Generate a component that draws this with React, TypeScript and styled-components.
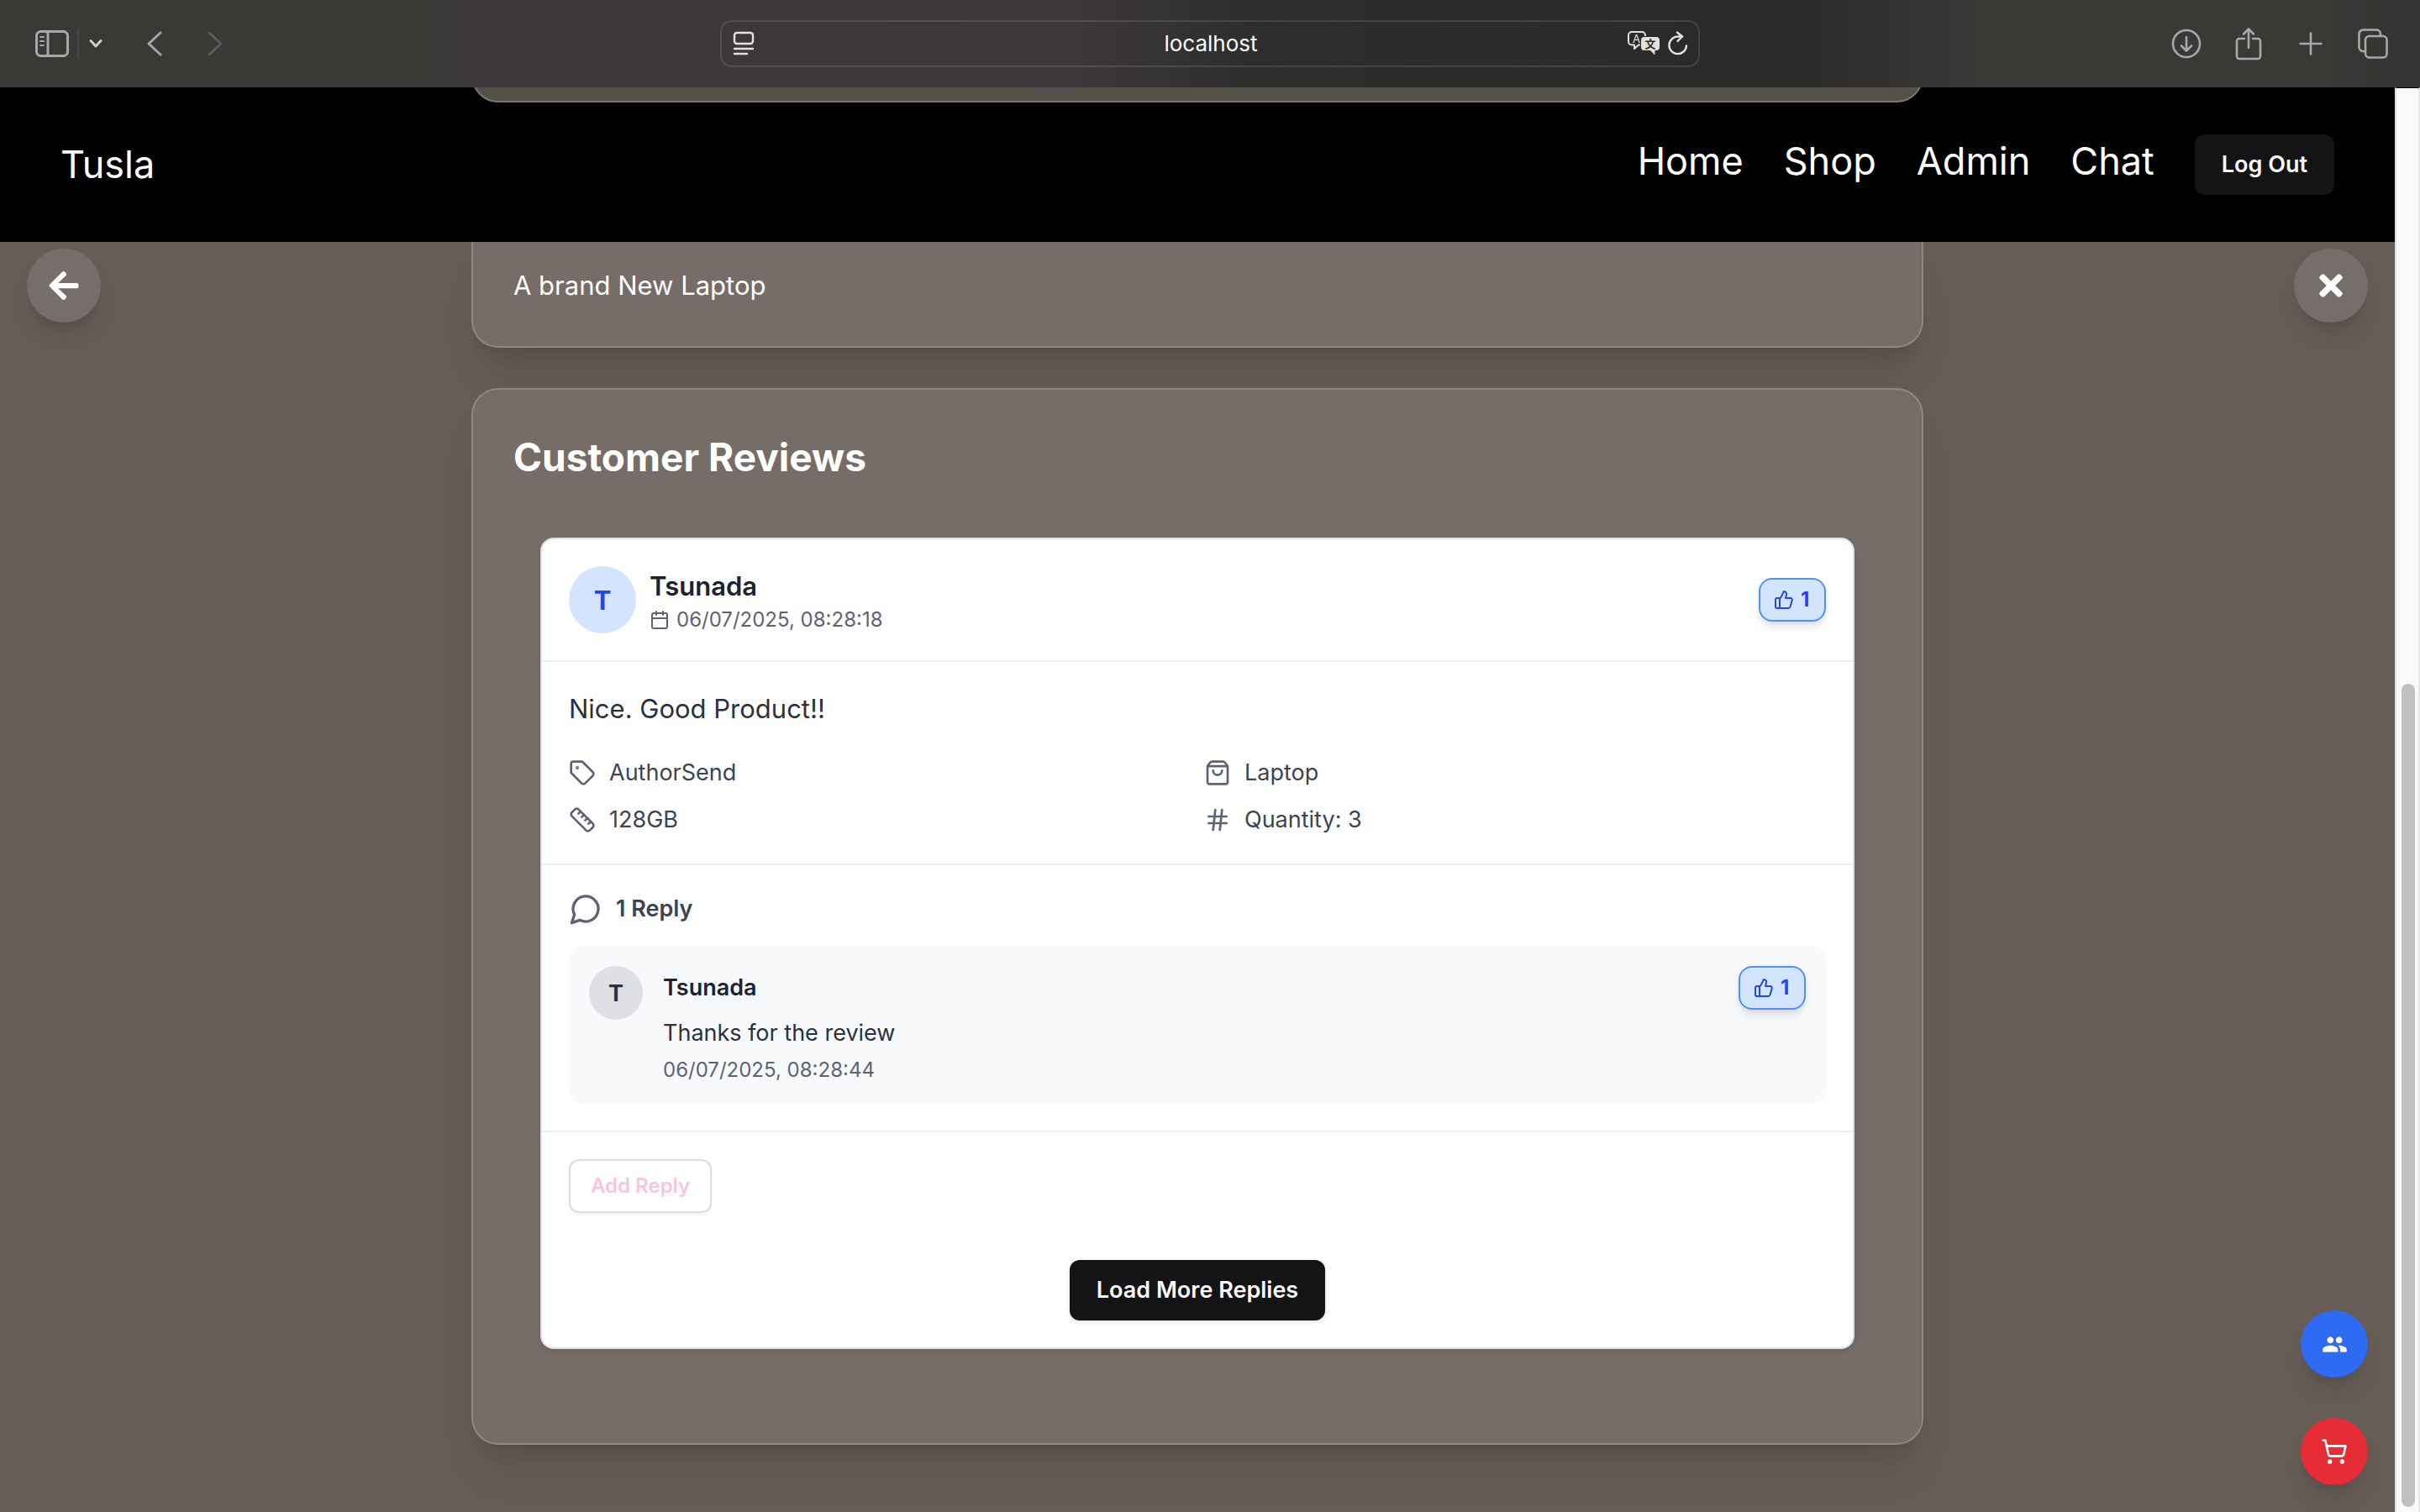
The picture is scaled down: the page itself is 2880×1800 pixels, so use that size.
import React from "react";
import styled, { createGlobalStyle } from "styled-components";
import { Calendar, Hash, Ruler, ShoppingBag, ShoppingCart, Tag, ThumbsUp } from "lucide-react";
import { FaArrowLeft, FaTimes } from "react-icons/fa";
import { MdPeople } from "react-icons/md";

const GlobalStyle = createGlobalStyle`
  *, *::before, *::after { box-sizing: border-box; }
  html, body { margin: 0; padding: 0; }
  body {
    font-family: Inter, Roboto, "Liberation Sans", sans-serif;
    background: #665d57;
    color: #ffffff;
  }
  button, input { font-family: inherit; margin: 0; }
  button { cursor: pointer; }
  h1, h2, h3, p, ul { margin: 0; padding: 0; }
  svg { display: block; flex-shrink: 0; }
`;

/* ---------- browser window ---------- */

const Window = styled.div`
  display: flex;
  flex-direction: column;
  min-height: 100vh;
`;

const Toolbar = styled.header`
  display: grid;
  grid-template-columns: 1fr minmax(0, 1166px) 1fr;
  align-items: center;
  height: 104px;
  background: linear-gradient(
    90deg,
    #3a3936 0%,
    #3a3936 18%,
    #3d373a 21%,
    #3d383b 44%,
    #2d2d2c 52%,
    #2a2a29 74%,
    #3a3936 82%,
    #3a3936 96%,
    #343331 100%
  );
`;

const ToolGroup = styled.div<{ $end?: boolean }>`
  display: flex;
  align-items: center;
  justify-content: ${(p) => (p.$end ? "flex-end" : "flex-start")};
  gap: ${(p) => (p.$end ? "30px" : "8px")};
  padding: ${(p) => (p.$end ? "0 34px" : "0 40px")};
`;

const ToolButton = styled.button<{ $dim?: boolean }>`
  display: flex;
  align-items: center;
  justify-content: center;
  min-width: 44px;
  height: 52px;
  padding: 0;
  border: 0;
  background: none;
  color: ${(p) => (p.$dim ? "#5c5b59" : "#a9a8a6")};
`;

const SlimButton = styled(ToolButton)`
  min-width: 24px;
  color: #d0cfcd;
`;

const ToolDivider = styled.span`
  width: 2px;
  height: 36px;
  background: #474644;
`;

const HistoryGroup = styled.div`
  display: flex;
  gap: 28px;
  padding-left: 28px;
`;

const AddressBar = styled.div`
  display: flex;
  align-items: center;
  gap: 8px;
  height: 56px;
  padding: 0 10px 0 12px;
  border: 2px solid rgba(255, 255, 255, 0.12);
  border-radius: 14px;
  color: #e2e1e1;
`;

const AddressSide = styled.div<{ $end?: boolean }>`
  display: flex;
  flex: 0 0 80px;
  gap: 8px;
  justify-content: ${(p) => (p.$end ? "flex-end" : "flex-start")};
`;

const AddressButton = styled.button`
  display: flex;
  padding: 0;
  border: 0;
  background: none;
  color: inherit;
`;

const AddressInput = styled.input`
  flex: 1;
  min-width: 0;
  padding: 0;
  border: 0;
  outline: 0;
  background: none;
  color: #ffffff;
  font-size: 26px;
  line-height: 32px;
  text-align: center;
`;

const Viewport = styled.div`
  display: flex;
  flex: 1;
`;

const Page = styled.div`
  display: flex;
  flex: 1;
  flex-direction: column;
  min-width: 0;
  background: #665d57;
`;

const ScrollTrack = styled.div`
  display: flex;
  flex-direction: column;
  justify-content: flex-end;
  flex: 0 0 30px;
  padding: 0 4px 6px 6px;
  border-left: 2px solid #e0e3e6;
  border-right: 2px solid #e8e8e8;
  border-top: 1px solid #000000;
  background: #fafafa;
`;

const ScrollThumb = styled.div`
  width: 16px;
  height: 58%;
  border-radius: 8px;
  background: #c0c0c0;
`;

/* ---------- site navigation ---------- */

const SiteHeader = styled.div`
  background: #000000;
`;

const CardPeek = styled.div`
  display: flex;
  align-items: flex-end;
  height: 18px;
  max-width: 1728px;
  margin: 0 auto;
  overflow: hidden;
`;

const CardPeekEdge = styled.div`
  flex: 1;
  height: 64px;
  flex-shrink: 0;
  border: 2px solid #7b7672;
  border-radius: 32px;
  background: #54504b;
`;

const NavBar = styled.nav`
  display: flex;
  align-items: center;
  justify-content: space-between;
  padding: 38px 72px 56px;
`;

const Brand = styled.a`
  color: #ffffff;
  font-size: 45px;
  line-height: 64px;
  text-decoration: none;
`;

const NavItems = styled.div`
  display: flex;
  align-items: flex-start;
  gap: 48px;
`;

const NavLink = styled.a`
  color: #ffffff;
  font-size: 45px;
  line-height: 64px;
  text-decoration: none;
`;

const SolidButton = styled.button`
  height: 72px;
  padding: 0 32px;
  border: 0;
  border-radius: 12px;
  background: #141416;
  color: #fafafa;
  font-size: 27px;
  font-weight: 600;
  line-height: 40px;
  box-shadow: 0 2px 6px rgba(0, 0, 0, 0.12);
`;

/* ---------- page content ---------- */

const Main = styled.main`
  position: relative;
  flex: 1;
  padding: 0 32px 80px;
`;

const Column = styled.div`
  display: flex;
  flex-direction: column;
  gap: 48px;
  max-width: 1728px;
  margin: 0 auto;
`;

const Panel = styled.section<{ $cut?: boolean }>`
  padding: ${(p) => (p.$cut ? "28px 48px 48px" : "48px")};
  border: 2px solid rgba(255, 255, 255, 0.18);
  border-top-width: ${(p) => (p.$cut ? "0" : "2px")};
  border-radius: ${(p) => (p.$cut ? "0 0 32px 32px" : "32px")};
  background: rgba(255, 245, 255, 0.11);
  box-shadow: 0 40px 50px -10px rgba(0, 0, 0, 0.1), 0 16px 20px -12px rgba(0, 0, 0, 0.1);
`;

const Description = styled.p`
  font-size: 31px;
  line-height: 48px;
`;

const PanelTitle = styled.h2`
  font-size: 46px;
  font-weight: 700;
  line-height: 64px;
`;

const ReviewList = styled.div`
  padding: 64px 32px;
`;

const Review = styled.article`
  border: 2px solid #dfe1e6;
  border-radius: 16px;
  background: #ffffff;
  color: #1b2230;
  box-shadow: 0 2px 6px rgba(0, 0, 0, 0.1);
`;

const Section = styled.div<{ $last?: boolean }>`
  padding: 32px;
  border-bottom: ${(p) => (p.$last ? "0" : "2px solid #eff0f5")};
`;

const HeaderRow = styled.div`
  display: flex;
  align-items: center;
  gap: 16px;
`;

const Avatar = styled.span<{ $small?: boolean }>`
  display: flex;
  align-items: center;
  justify-content: center;
  flex-shrink: 0;
  width: ${(p) => (p.$small ? "64px" : "80px")};
  height: ${(p) => (p.$small ? "64px" : "80px")};
  border-radius: 50%;
  background: ${(p) => (p.$small ? "#dfe0e6" : "#d3e4fe")};
  color: ${(p) => (p.$small ? "#2a3342" : "#1f48e6")};
  font-size: ${(p) => (p.$small ? "27px" : "31px")};
  font-weight: 700;
`;

const Grow = styled.div`
  flex: 1;
  min-width: 0;
`;

const Author = styled.h3<{ $small?: boolean }>`
  color: #1b2230;
  font-size: ${(p) => (p.$small ? "27px" : "31px")};
  font-weight: 600;
  line-height: ${(p) => (p.$small ? "52px" : "48px")};
`;

const Stamp = styled.p`
  display: flex;
  align-items: center;
  gap: 8px;
  color: #5d6375;
  font-size: 24px;
  line-height: 32px;
`;

const Like = styled.button`
  display: flex;
  align-items: center;
  gap: 8px;
  min-width: 80px;
  height: 52px;
  padding: 0 16px;
  border: 2px solid #4f91f9;
  border-radius: 16px;
  background: #d3e4fe;
  color: #1f48e6;
  font-size: 24px;
  font-weight: 700;
  line-height: 32px;
  box-shadow: 0 8px 12px -2px rgba(0, 0, 0, 0.1), 0 4px 8px -4px rgba(0, 0, 0, 0.1);
`;

const Comment = styled.p`
  color: #29323f;
  font-size: 31px;
  line-height: 48px;
`;

const Facts = styled.div`
  display: grid;
  grid-template-columns: 1fr 1fr;
  gap: 16px;
  padding-top: 32px;
`;

const Fact = styled.div<{ $strong?: boolean }>`
  display: flex;
  align-items: center;
  gap: 16px;
  color: #3b4452;
  font-size: 27px;
  font-weight: ${(p) => (p.$strong ? 600 : 400)};
  line-height: 40px;

  svg { color: #5d6375; }
`;

const Reply = styled.div`
  display: flex;
  align-items: flex-start;
  gap: 24px;
  margin-top: 24px;
  padding: 24px;
  border-radius: 16px;
  background: #f8f9fb;
`;

const ReplyBody = styled(Grow)`
  display: flex;
  flex-direction: column;
  gap: 8px;
`;

const ReplyHead = styled.div`
  display: flex;
  justify-content: space-between;
`;

const ReplyText = styled.p`
  color: #29323f;
  font-size: 27px;
  line-height: 40px;
`;

const OutlineButton = styled.button`
  height: 64px;
  padding: 0 24px;
  border: 2px solid #dddde1;
  border-radius: 12px;
  background: #ffffff;
  color: #f9c4e2;
  font-size: 24px;
  font-weight: 600;
  line-height: 32px;
  box-shadow: 0 2px 4px rgba(0, 0, 0, 0.06);
`;

const LoadMore = styled.div`
  display: flex;
  justify-content: center;
  padding-top: 56px;
`;

/* ---------- floating controls ---------- */

const RoundButton = styled.button<{ $side: "left" | "right" }>`
  position: absolute;
  top: 8px;
  ${(p) => p.$side}: 32px;
  display: flex;
  align-items: center;
  justify-content: center;
  width: 88px;
  height: 88px;
  padding: 0;
  border: 0;
  border-radius: 50%;
  background: #766e6a;
  color: #ffffff;
  box-shadow: 0 20px 30px -6px rgba(0, 0, 0, 0.12), 0 8px 12px -8px rgba(0, 0, 0, 0.12);
`;

const Dock = styled.div`
  position: absolute;
  right: 32px;
  bottom: 32px;
  display: flex;
  flex-direction: column;
  gap: 48px;
`;

const DockButton = styled.button<{ $color: string }>`
  display: flex;
  align-items: center;
  justify-content: center;
  width: 80px;
  height: 80px;
  padding: 0;
  border: 0;
  border-radius: 50%;
  background: ${(p) => p.$color};
  color: #ffffff;
  box-shadow: 0 20px 30px -6px rgba(0, 0, 0, 0.12), 0 8px 12px -8px rgba(0, 0, 0, 0.12);
`;

/* ---------- icons ---------- */

type LineIconProps = { w: number; h: number; stroke?: number; children: React.ReactNode };

const LineIcon = ({ w, h, stroke = 3, children }: LineIconProps) => (
  <svg
    width={w}
    height={h}
    viewBox={`0 0 ${w} ${h}`}
    fill="none"
    stroke="currentColor"
    strokeWidth={stroke}
    strokeLinecap="round"
    strokeLinejoin="round"
    aria-hidden="true"
  >
    {children}
  </svg>
);

const SidebarIcon = () => (
  <LineIcon w={40} h={32}>
    <rect x="1.5" y="1.5" width="37" height="29" rx="5" />
    <path d="M15 2v28" />
    <path d="M6 8h4M6 13h4M6 18h4" strokeWidth={2} />
  </LineIcon>
);

const ChevronSmallIcon = () => (
  <LineIcon w={16} h={12}>
    <path d="M2 2.500l6 6.500l6-6.500" />
  </LineIcon>
);

const BackIcon = () => (
  <LineIcon w={20} h={32}>
    <path d="M17 3L3 16l14 13" />
  </LineIcon>
);

const ForwardIcon = () => (
  <LineIcon w={20} h={32}>
    <path d="M3 3l14 13L3 29" />
  </LineIcon>
);

const ReaderIcon = () => (
  <LineIcon w={28} h={30} stroke={2.4}>
    <rect x="3" y="2" width="22" height="13" rx="3" />
    <path d="M3 21h22M3 27h15" />
  </LineIcon>
);

const TranslateIcon = () => (
  <svg width="38" height="30" viewBox="0 0 38 30" aria-hidden="true">
    <path
      d="M15 16.500h-2l-5 4.500v-4.500H5a4 4 0 0 1-4-4V5a4 4 0 0 1 4-4h12a4 4 0 0 1 4 4v1"
      fill="none"
      stroke="currentColor"
      strokeWidth="2"
      strokeLinejoin="round"
    />
    <path
      d="M20 7h14a4 4 0 0 1 4 4v8a4 4 0 0 1-4 4h-1.500v5.500L27 23h-7a4 4 0 0 1-4-4v-8a4 4 0 0 1 4-4z"
      fill="currentColor"
    />
    <text x="10.500" y="13.500" fontSize="13" fontFamily="Inter, sans-serif" textAnchor="middle" fill="currentColor">
      A
    </text>
    <text
      x="27"
      y="20"
      fontSize="13"
      fontWeight="700"
      fontFamily='"Noto Sans CJK SC", sans-serif'
      textAnchor="middle"
      fill="#2d2d2c"
    >
      文
    </text>
  </svg>
);

const ReloadIcon = () => (
  <LineIcon w={28} h={30} stroke={2.4}>
    <path d="M24 17.500A10.300 10.300 0 1 1 14 6.500h5" />
    <path d="M13 1.500l6 5l-5.500 5.500" />
  </LineIcon>
);

const DownloadIcon = () => (
  <LineIcon w={36} h={36} stroke={2.6}>
    <circle cx="18" cy="18" r="16" />
    <path d="M18 10v16M12 20.500l6 6l6-6" />
  </LineIcon>
);

const ShareIcon = () => (
  <LineIcon w={32} h={40} stroke={2.6}>
    <path d="M11 14H5a3 3 0 0 0-3 3v18a3 3 0 0 0 3 3h22a3 3 0 0 0 3-3V17a3 3 0 0 0-3-3h-6" />
    <path d="M16 25V2.500M10 8.500l6-6l6 6" />
  </LineIcon>
);

const PlusIcon = () => (
  <LineIcon w={28} h={28} stroke={2.6}>
    <path d="M14 1.500v25M1.500 14h25" />
  </LineIcon>
);

const TabsIcon = () => (
  <LineIcon w={36} h={36} stroke={2.6}>
    <rect x="9" y="9" width="25.500" height="25.500" rx="4.500" />
    <path d="M9 27H6.500a5 5 0 0 1-5-5V6.500a5 5 0 0 1 5-5H22a5 5 0 0 1 5 5V9" />
  </LineIcon>
);

const SpeechIcon = () => (
  <svg
    width="40"
    height="40"
    viewBox="0 0 24 24"
    fill="none"
    stroke="currentColor"
    strokeWidth="2"
    strokeLinecap="round"
    strokeLinejoin="round"
    aria-hidden="true"
  >
    <path d="M7.900 20A9 9 0 1 0 4 16.100L2 22Z" />
  </svg>
);

/* ---------- composition ---------- */

const NAV_LINKS = ["Home", "Shop", "Admin", "Chat"];

const FACTS = [
  { icon: Tag, label: "AuthorSend" },
  { icon: ShoppingBag, label: "Laptop" },
  { icon: Ruler, label: "128GB" },
  { icon: Hash, label: "Quantity: 3" },
];

const LikeButton = ({ count }: { count: number }) => (
  <Like type="button" aria-label={`Like, ${count}`}>
    <ThumbsUp size={24} />
    {count}
  </Like>
);

const BrowserToolbar = () => (
  <Toolbar>
    <ToolGroup>
      <ToolButton type="button" aria-label="Show sidebar">
        <SidebarIcon />
      </ToolButton>
      <ToolDivider />
      <SlimButton type="button" aria-label="Tab groups">
        <ChevronSmallIcon />
      </SlimButton>
      <HistoryGroup>
        <ToolButton type="button" aria-label="Back">
          <BackIcon />
        </ToolButton>
        <ToolButton type="button" aria-label="Forward" $dim>
          <ForwardIcon />
        </ToolButton>
      </HistoryGroup>
    </ToolGroup>
    <AddressBar>
      <AddressSide>
        <AddressButton type="button" aria-label="Page settings">
          <ReaderIcon />
        </AddressButton>
      </AddressSide>
      <AddressInput type="text" aria-label="Address" defaultValue="localhost" />
      <AddressSide $end>
        <AddressButton type="button" aria-label="Translate">
          <TranslateIcon />
        </AddressButton>
        <AddressButton type="button" aria-label="Reload">
          <ReloadIcon />
        </AddressButton>
      </AddressSide>
    </AddressBar>
    <ToolGroup $end>
      <ToolButton type="button" aria-label="Downloads">
        <DownloadIcon />
      </ToolButton>
      <ToolButton type="button" aria-label="Share">
        <ShareIcon />
      </ToolButton>
      <ToolButton type="button" aria-label="New tab">
        <PlusIcon />
      </ToolButton>
      <ToolButton type="button" aria-label="Tab overview">
        <TabsIcon />
      </ToolButton>
    </ToolGroup>
  </Toolbar>
);

export default function App() {
  return (
    <Window>
      <GlobalStyle />
      <BrowserToolbar />
      <Viewport>
        <Page>
          <SiteHeader>
            <CardPeek>
              <CardPeekEdge />
            </CardPeek>
            <NavBar>
              <Brand href="#">Tusla</Brand>
              <NavItems>
                {NAV_LINKS.map((name) => (
                  <NavLink key={name} href="#">
                    {name}
                  </NavLink>
                ))}
                <SolidButton type="button">Log Out</SolidButton>
              </NavItems>
            </NavBar>
          </SiteHeader>
          <Main>
            <Column>
              <Panel $cut>
                <Description>A brand New Laptop</Description>
              </Panel>
              <Panel>
                <PanelTitle>Customer Reviews</PanelTitle>
                <ReviewList>
                  <Review>
                    <Section>
                      <HeaderRow>
                        <Avatar>T</Avatar>
                        <Grow>
                          <Author>Tsunada</Author>
                          <Stamp>
                            <Calendar size={24} />
                            06/07/2025, 08:28:18
                          </Stamp>
                        </Grow>
                        <LikeButton count={1} />
                      </HeaderRow>
                    </Section>
                    <Section>
                      <Comment>Nice. Good Product!!</Comment>
                      <Facts>
                        {FACTS.map(({ icon: Icon, label }) => (
                          <Fact key={label}>
                            <Icon size={32} />
                            {label}
                          </Fact>
                        ))}
                      </Facts>
                    </Section>
                    <Section>
                      <Fact $strong>
                        <SpeechIcon />1 Reply
                      </Fact>
                      <Reply>
                        <Avatar $small>T</Avatar>
                        <ReplyBody>
                          <ReplyHead>
                            <Author $small>Tsunada</Author>
                            <LikeButton count={1} />
                          </ReplyHead>
                          <ReplyText>Thanks for the review</ReplyText>
                          <Stamp>06/07/2025, 08:28:44</Stamp>
                        </ReplyBody>
                      </Reply>
                    </Section>
                    <Section $last>
                      <OutlineButton type="button">Add Reply</OutlineButton>
                      <LoadMore>
                        <SolidButton type="button">Load More Replies</SolidButton>
                      </LoadMore>
                    </Section>
                  </Review>
                </ReviewList>
              </Panel>
            </Column>
            <RoundButton type="button" aria-label="Go back" $side="left">
              <FaArrowLeft size={40} />
            </RoundButton>
            <RoundButton type="button" aria-label="Close" $side="right">
              <FaTimes size={40} />
            </RoundButton>
            <Dock>
              <DockButton type="button" aria-label="Friends" $color="#2f6af3">
                <MdPeople size={31} />
              </DockButton>
              <DockButton type="button" aria-label="Cart" $color="#e82c36">
                <ShoppingCart size={32} />
              </DockButton>
            </Dock>
          </Main>
        </Page>
        <ScrollTrack>
          <ScrollThumb />
        </ScrollTrack>
      </Viewport>
    </Window>
  );
}
